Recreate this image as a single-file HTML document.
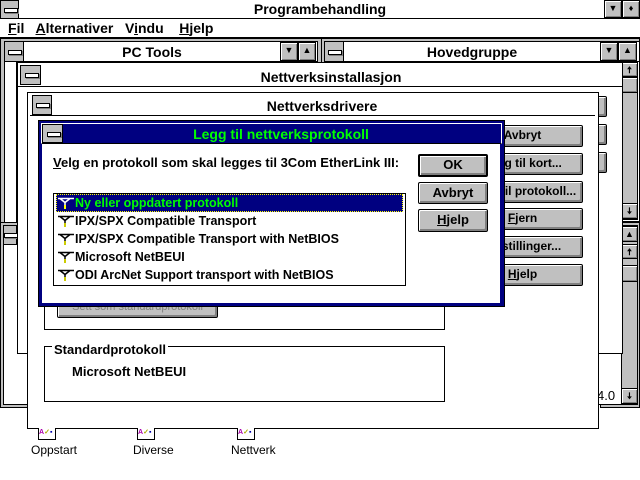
<!DOCTYPE html>
<html><head><meta charset="utf-8"><style>
*{margin:0;padding:0;box-sizing:border-box}
body{width:640px;height:480px;background:#fff;position:relative;overflow:hidden;font:bold 12px "Liberation Sans",Arial,sans-serif;color:#000}
div{position:absolute}
.g{background:#c0c0c0}
.b{border:1px solid #000}
.btn{background:#c0c0c0;border:1px solid #000;border-radius:2px;box-shadow:inset 1px 1px 0 #fff,inset -2px -2px 0 #808080;text-align:center;line-height:19px;overflow:hidden}
.sys{background:#c0c0c0;border:1px solid #000}
.sys:after{content:"";position:absolute;left:50%;top:50%;width:12px;height:3px;margin:-2px 0 0 -6px;background:#fff;border:1px solid #000;box-shadow:1px 1px 0 #808080}
.sb{background:#c0c0c0;border:1px solid #000;box-shadow:inset 1px 1px 0 #fff,inset -1px -1px 0 #808080;font-size:9px;text-align:center;line-height:15px}
.t{white-space:nowrap}
u{text-decoration:underline}
.it{left:2px;height:18px;line-height:18px;width:347px;padding-left:19px;white-space:nowrap;font-size:12.5px}
.ic{position:absolute;left:2px;top:3px;width:16px;height:12px}
</style></head><body>
<div class="b" style="left:0;top:0;width:640px;height:19px;border-width:0 0 1px 0"></div>
<div class="sys" style="left:0;top:0;width:19px;height:19px"></div>
<div class="t" style="left:0;width:640px;top:1px;text-align:center;font-size:14px">Programbehandling</div>
<div class="sb" style="left:604px;top:0;width:18px;height:18px">▼</div>
<div class="sb" style="left:622px;top:0;width:18px;height:18px">♦</div>
<div class="t" style="left:8px;top:20px;font-size:14px"><u>F</u>il &nbsp; <u>A</u>lternativer &nbsp; V<u>i</u>ndu &nbsp; &nbsp;<u>H</u>jelp</div>
<div style="left:0;top:37px;width:640px;height:1px;background:#000"></div>
<div class="g b" style="left:0;top:38px;width:322px;height:316px"></div>
<div class="b" style="left:4px;top:41px;width:314px;height:312px;background:#fff"></div>
<div class="b" style="left:4px;top:41px;width:314px;height:21px;background:#fff"></div>
<div class="sys" style="left:4px;top:41px;width:20px;height:21px"></div>
<div class="t" style="left:24px;width:256px;top:44px;text-align:center;font-size:14px">PC Tools</div>
<div class="sb" style="left:280px;top:42px;width:18px;height:19px">▼</div>
<div class="sb" style="left:298px;top:42px;width:18px;height:19px">▲</div>
<div style="left:16px;top:62px;width:1px;height:292px;background:#000"></div>
<div class="g b" style="left:321px;top:38px;width:319px;height:184px"></div>
<div class="b" style="left:324px;top:41px;width:316px;height:181px;background:#fff"></div>
<div class="b" style="left:324px;top:41px;width:316px;height:21px;background:#fff"></div>
<div class="sys" style="left:324px;top:41px;width:20px;height:21px"></div>
<div class="t" style="left:344px;width:256px;top:44px;text-align:center;font-size:14px">Hovedgruppe</div>
<div class="sb" style="left:600px;top:42px;width:18px;height:19px">▼</div>
<div class="sb" style="left:618px;top:42px;width:19px;height:19px">▲</div>
<div class="g b" style="left:621px;top:62px;width:17px;height:158px"></div>
<div class="sb" style="left:621px;top:62px;width:17px;height:15px">🠅</div>
<div class="sb" style="left:621px;top:77px;width:17px;height:16px"></div>
<div class="sb" style="left:621px;top:203px;width:17px;height:16px">🠇</div>
<div class="g b" style="left:0;top:222px;width:30px;height:186px"></div>
<div class="b" style="left:3px;top:225px;width:30px;height:180px;background:#fff"></div>
<div class="sys" style="left:3px;top:225px;width:14px;height:20px"></div>
<div class="g b" style="left:600px;top:222px;width:40px;height:186px"></div>
<div class="b" style="left:590px;top:225px;width:48px;height:180px;background:#fff"></div>
<div class="g b" style="left:621px;top:225px;width:17px;height:180px"></div>
<div class="sb" style="left:621px;top:226px;width:17px;height:16px">▲</div>
<div class="sb" style="left:621px;top:244px;width:17px;height:15px">🠅</div>
<div class="sb" style="left:621px;top:265px;width:17px;height:17px"></div>
<div class="sb" style="left:621px;top:388px;width:17px;height:16px">🠇</div>
<div class="t" style="left:597px;top:388px;font-weight:normal;font-size:13px">4.0</div>
<div class="b" style="left:17px;top:62px;width:606px;height:292px;background:#fff"></div>
<div class="b" style="left:17px;top:62px;width:606px;height:25px;background:#fff"></div>
<div class="sys" style="left:20px;top:65px;width:21px;height:20px"></div>
<div class="t" style="left:41px;width:580px;top:69px;text-align:center;font-size:14px">Nettverksinstallasjon</div>
<div class="btn" style="left:585px;top:96px;width:22px;height:21px"></div>
<div class="btn" style="left:585px;top:124px;width:22px;height:21px"></div>
<div class="btn" style="left:585px;top:152px;width:22px;height:21px"></div>
<div class="b" style="left:27px;top:92px;width:572px;height:337px;background:#fff"></div>
<div style="left:30px;top:115px;width:565px;height:1px;background:#000"></div>
<div class="sys" style="left:32px;top:95px;width:20px;height:20px"></div>
<div class="t" style="left:52px;width:540px;top:98px;text-align:center;font-size:14px">Nettverksdrivere</div>
<div class="btn t" style="left:462px;top:125px;width:121px;height:22px">Avbryt</div>
<div class="btn t" style="left:462px;top:153px;width:121px;height:22px">Legg til kort...</div>
<div class="btn t" style="left:462px;top:181px;width:121px;height:22px">Legg til protokoll...</div>
<div class="btn t" style="left:462px;top:208px;width:121px;height:22px"><u>F</u>jern</div>
<div class="btn t" style="left:462px;top:236px;width:121px;height:22px">Innstillinger...</div>
<div class="btn t" style="left:462px;top:264px;width:121px;height:22px"><u>H</u>jelp</div>
<div class="b" style="left:44px;top:250px;width:401px;height:80px"></div>
<div class="btn t" style="left:57px;top:297px;width:161px;height:21px;color:#808080;font-weight:normal;font-size:11px">Sett som standardprotokoll</div>
<div class="b" style="left:44px;top:346px;width:401px;height:56px"></div>
<div class="t" style="left:52px;top:342px;background:#fff;padding:0 2px;font-size:13px">Standardprotokoll</div>
<div class="t" style="left:72px;top:364px;font-size:13px">Microsoft NetBEUI</div>
<div style="left:38px;top:120px;width:467px;height:187px;background:#000080;border:1px solid #000"></div>
<div style="left:42px;top:143px;width:458px;height:160px;background:#fff"></div>
<div style="left:41px;top:123px;width:461px;height:21px;background:#000080;border:1px solid #fff;border-bottom:1px solid #000"></div>
<div class="sys" style="left:42px;top:124px;width:21px;height:19px"></div>
<div class="t" style="left:63px;width:436px;top:126px;text-align:center;color:#00ff00;font-size:14px">Legg til nettverksprotokoll</div>
<div class="t" style="left:53px;top:155px;font-size:13px"><u>V</u>elg en protokoll som skal legges til 3Com EtherLink III:</div>
<div class="b" style="left:53px;top:193px;width:353px;height:93px;background:#fff">
 <div class="it" style="top:0;background:#000080;color:#00ff00;outline:1px dotted #ff0;outline-offset:-1px"><svg class="ic" viewBox="0 0 16 12"><path d="M0 1.5h16M2 1.5l5 4M7 5.5v6M12 1.5l-5 4" stroke="#fff" stroke-width="1.5" fill="none"/><rect x="6" y="8" width="2" height="4" fill="#ff0"/></svg>Ny eller oppdatert protokoll</div>
 <div class="it" style="top:18px"><svg class="ic" viewBox="0 0 16 12"><path d="M0 1.5h16M2 1.5l5 4M7 5.5v6M12 1.5l-5 4" stroke="#000" stroke-width="1.5" fill="none"/><rect x="6" y="8" width="2" height="4" fill="#cc0"/></svg>IPX/SPX Compatible Transport</div>
 <div class="it" style="top:36px"><svg class="ic" viewBox="0 0 16 12"><path d="M0 1.5h16M2 1.5l5 4M7 5.5v6M12 1.5l-5 4" stroke="#000" stroke-width="1.5" fill="none"/><rect x="6" y="8" width="2" height="4" fill="#cc0"/></svg>IPX/SPX Compatible Transport with NetBIOS</div>
 <div class="it" style="top:54px"><svg class="ic" viewBox="0 0 16 12"><path d="M0 1.5h16M2 1.5l5 4M7 5.5v6M12 1.5l-5 4" stroke="#000" stroke-width="1.5" fill="none"/><rect x="6" y="8" width="2" height="4" fill="#cc0"/></svg>Microsoft NetBEUI</div>
 <div class="it" style="top:72px"><svg class="ic" viewBox="0 0 16 12"><path d="M0 1.5h16M2 1.5l5 4M7 5.5v6M12 1.5l-5 4" stroke="#000" stroke-width="1.5" fill="none"/><rect x="6" y="8" width="2" height="4" fill="#cc0"/></svg>ODI ArcNet Support transport with NetBIOS</div>
</div>
<div class="btn" style="left:418px;top:154px;width:70px;height:23px;border-width:2px;line-height:18px;font-size:13px">OK</div>
<div class="btn" style="left:418px;top:182px;width:70px;height:22px;font-size:13px">Avbryt</div>
<div class="btn" style="left:418px;top:209px;width:70px;height:23px;font-size:13px"><u>H</u>jelp</div>
<div style="left:38px;top:428px;width:18px;height:12px;border:1px solid #000;border-top:0;background:#fff;font-size:7px;line-height:10px;color:#a0a"> A<span style="color:#aa0">✓</span><span style="color:#00a">▪</span></div>
<div style="left:137px;top:428px;width:18px;height:12px;border:1px solid #000;border-top:0;background:#fff;font-size:7px;line-height:10px;color:#a0a"> A<span style="color:#aa0">✓</span><span style="color:#00a">▪</span></div>
<div style="left:237px;top:428px;width:18px;height:12px;border:1px solid #000;border-top:0;background:#fff;font-size:7px;line-height:10px;color:#a0a"> A<span style="color:#aa0">✓</span><span style="color:#00a">▪</span></div>
<div class="t" style="left:31px;top:443px;font-weight:normal;font-size:12px">Oppstart</div>
<div class="t" style="left:133px;top:443px;font-weight:normal;font-size:12px">Diverse</div>
<div class="t" style="left:231px;top:443px;font-weight:normal;font-size:12px">Nettverk</div>
</body></html>
